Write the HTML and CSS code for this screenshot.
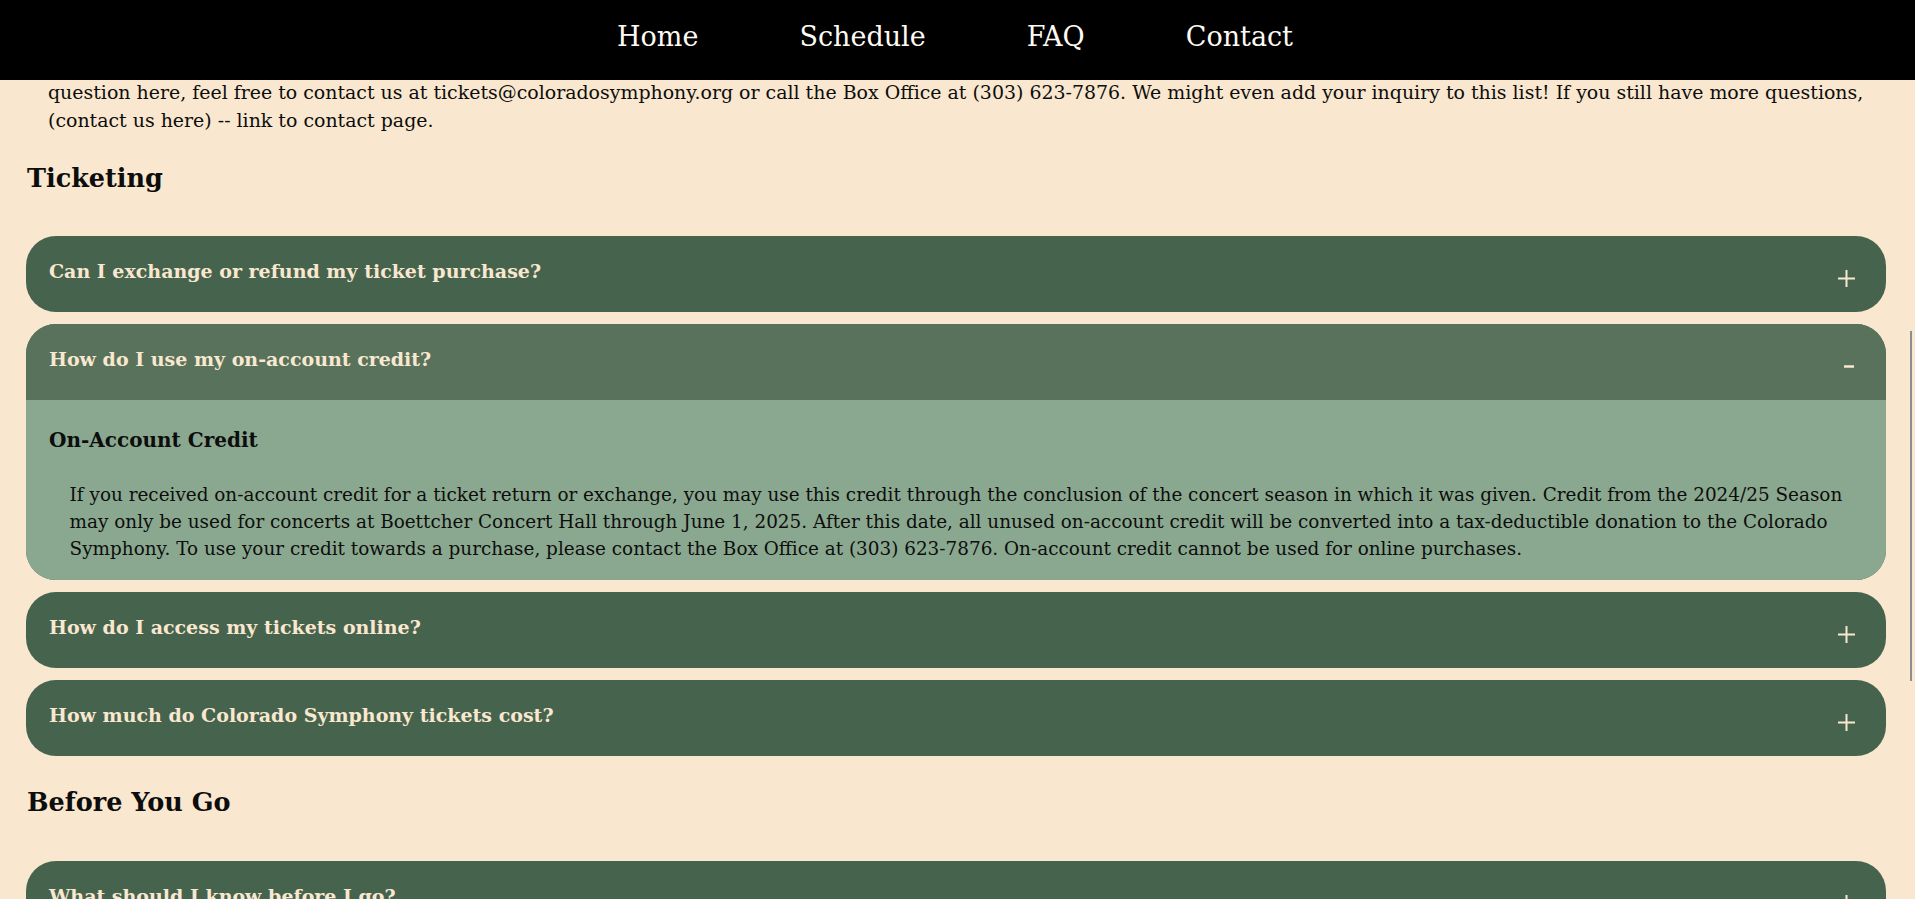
FILE: index.html
```html
<!DOCTYPE html>
<html lang="en">
<head>
<meta charset="utf-8">
<title>FAQ - Colorado Symphony</title>
<link rel="stylesheet" href="styles.css">
</head>
<body>
<nav class="topnav">
  <a class="topnav__link" href="#">Home</a>
  <a class="topnav__link" href="#">Schedule</a>
  <a class="topnav__link" href="#">FAQ</a>
  <a class="topnav__link" href="#">Contact</a>
</nav>

<main class="page">
  <p class="intro">question here, feel free to contact us at tickets@coloradosymphony.org or call the Box Office at (303) 623-7876. We might even add your inquiry to this list! If you still have more questions, (contact us here) -- link to contact page.</p>

  <section class="faq-section">
    <h2 class="faq-section__title">Ticketing</h2>
    <div class="accordion">
      <div class="acc">
        <div class="acc__head">
          <h3 class="acc__q">Can I exchange or refund my ticket purchase?</h3>
          <svg class="acc__icon" width="17" height="17" viewBox="0 0 17 17"><path d="M8.5 0v17M0 8.5h17" stroke="#f9e8cf" stroke-width="2" fill="none"/></svg>
        </div>
      </div>
      <div class="acc acc--open">
        <div class="acc__head">
          <h3 class="acc__q">How do I use my on-account credit?</h3>
          <svg class="acc__icon" width="17" height="17" viewBox="0 0 17 17"><path d="M6 8.5h10" stroke="#f9e8cf" stroke-width="2.4" fill="none"/></svg>
        </div>
        <div class="acc__body">
          <h4 class="acc__subtitle">On-Account Credit</h4>
          <p class="acc__text">If you received on-account credit for a ticket return or exchange, you may use this credit through the conclusion of the concert season in which it was given. Credit from the 2024/25 Season may only be used for concerts at Boettcher Concert Hall through June 1, 2025. After this date, all unused on-account credit will be converted into a tax-deductible donation to the Colorado Symphony. To use your credit towards a purchase, please contact the Box Office at (303) 623-7876. On-account credit cannot be used for online purchases.</p>
        </div>
      </div>
      <div class="acc">
        <div class="acc__head">
          <h3 class="acc__q">How do I access my tickets online?</h3>
          <svg class="acc__icon" width="17" height="17" viewBox="0 0 17 17"><path d="M8.5 0v17M0 8.5h17" stroke="#f9e8cf" stroke-width="2" fill="none"/></svg>
        </div>
      </div>
      <div class="acc">
        <div class="acc__head">
          <h3 class="acc__q">How much do Colorado Symphony tickets cost?</h3>
          <svg class="acc__icon" width="17" height="17" viewBox="0 0 17 17"><path d="M8.5 0v17M0 8.5h17" stroke="#f9e8cf" stroke-width="2" fill="none"/></svg>
        </div>
      </div>
    </div>
  </section>

  <section class="faq-section">
    <h2 class="faq-section__title">Before You Go</h2>
    <div class="accordion">
      <div class="acc">
        <div class="acc__head">
          <h3 class="acc__q">What should I know before I go?</h3>
          <svg class="acc__icon" width="17" height="17" viewBox="0 0 17 17"><path d="M8.5 0v17M0 8.5h17" stroke="#f9e8cf" stroke-width="2" fill="none"/></svg>
        </div>
      </div>
      <div class="acc">
        <div class="acc__head">
          <h3 class="acc__q">Where do I park?</h3>
          <svg class="acc__icon" width="17" height="17" viewBox="0 0 17 17"><path d="M8.5 0v17M0 8.5h17" stroke="#f9e8cf" stroke-width="2" fill="none"/></svg>
        </div>
      </div>
    </div>
  </section>
</main>
<div class="scroll-thumb"></div>
</body>
</html>
```
FILE: styles.css
```css
html, body {
  margin: 0;
  padding: 0;
  overflow: hidden;
}
body {
  background: #f9e8cf;
  color: #0d0d0d;
  font-family: "DejaVu Serif", "Liberation Serif", serif;
}

.topnav {
  height: 80px;
  box-sizing: border-box;
  padding: 0 5px 7px 0;
  background: #000;
  display: flex;
  align-items: center;
  justify-content: center;
  gap: 101px;
}
.topnav__link {
  color: #fffaf2;
  text-decoration: none;
  font-size: 27px;
  line-height: 34px;
}

.page {
  padding: 0 29px 0 26px;
}

.intro {
  margin: -2px 0 -3px 22px;
  font-size: 18.95px;
  line-height: 28px;
}

.faq-section__title {
  margin: 30.5px 0 42.5px 1px;
  font-size: 25.5px;
  line-height: 32px;
  font-weight: bold;
}

.accordion {
  display: flex;
  flex-direction: column;
  gap: 12.5px;
}

.acc {
  border-radius: 30px;
  overflow: hidden;
  background: #46634e;
}

.acc__head {
  height: 75.5px;
  box-sizing: border-box;
  padding: 23px 31px 0 23px;
  display: flex;
  justify-content: space-between;
  align-items: flex-start;
  background: #46634e;
}
.acc--open .acc__head {
  background: #58725c;
}

.acc__q {
  margin: 0;
  color: #f9e8cf;
  font-size: 19px;
  line-height: 24px;
  font-weight: bold;
}

.acc__icon {
  display: block;
  margin-top: 11px;
  flex: none;
}

.acc__body {
  background: #8aa88f;
  padding: 27px 23px 18px 23px;
}
.acc__subtitle {
  margin: 0;
  font-size: 20px;
  line-height: 26px;
  font-weight: bold;
}
.acc__text {
  margin: 28px 0 0 20.6px;
  font-size: 18.4px;
  line-height: 27px;
}

.scroll-thumb {
  position: fixed;
  right: 3px;
  top: 331px;
  width: 2px;
  height: 350px;
  background: #8e8e8e;
}
```
